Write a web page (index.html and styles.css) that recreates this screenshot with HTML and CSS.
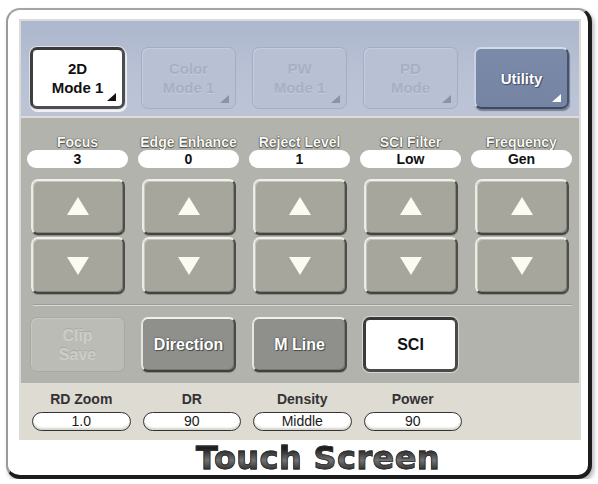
FILE: index.html
```html
<!DOCTYPE html>
<html lang="en">
<head>
<meta charset="utf-8">
<title>Touch Screen</title>
<link rel="stylesheet" href="styles.css">
</head>
<body>
<div class="device">
  <div class="screen">
    <div class="modes">
      <div class="mode mode-on">2D<br>Mode 1<span class="corner"></span></div>
      <div class="mode mode-off">Color<br>Mode 1<span class="corner"></span></div>
      <div class="mode mode-off">PW<br>Mode 1<span class="corner"></span></div>
      <div class="mode mode-off">PD<br>Mode<span class="corner"></span></div>
      <div class="mode mode-util">Utility<span class="corner"></span></div>
    </div>

    <div class="panel">
      <div class="params">
        <div class="param">
          <div class="param-name">Focus</div>
          <div class="param-value">3</div>
          <div class="step step-up"><span class="tri tri-up"></span></div>
          <div class="step step-down"><span class="tri tri-down"></span></div>
        </div>
        <div class="param">
          <div class="param-name">Edge Enhance</div>
          <div class="param-value">0</div>
          <div class="step step-up"><span class="tri tri-up"></span></div>
          <div class="step step-down"><span class="tri tri-down"></span></div>
        </div>
        <div class="param">
          <div class="param-name">Reject Level</div>
          <div class="param-value">1</div>
          <div class="step step-up"><span class="tri tri-up"></span></div>
          <div class="step step-down"><span class="tri tri-down"></span></div>
        </div>
        <div class="param">
          <div class="param-name">SCI Filter</div>
          <div class="param-value">Low</div>
          <div class="step step-up"><span class="tri tri-up"></span></div>
          <div class="step step-down"><span class="tri tri-down"></span></div>
        </div>
        <div class="param">
          <div class="param-name">Frequency</div>
          <div class="param-value">Gen</div>
          <div class="step step-up"><span class="tri tri-up"></span></div>
          <div class="step step-down"><span class="tri tri-down"></span></div>
        </div>
      </div>

      <div class="divider"></div>

      <div class="actions">
        <div class="action action-off">Clip<br>Save</div>
        <div class="action action-gray">Direction</div>
        <div class="action action-gray">M Line</div>
        <div class="action action-on">SCI</div>
      </div>
    </div>

    <div class="settings">
      <div class="setting">
        <div class="setting-name">RD Zoom</div>
        <div class="setting-value">1.0</div>
      </div>
      <div class="setting">
        <div class="setting-name">DR</div>
        <div class="setting-value">90</div>
      </div>
      <div class="setting">
        <div class="setting-name">Density</div>
        <div class="setting-value">Middle</div>
      </div>
      <div class="setting">
        <div class="setting-name">Power</div>
        <div class="setting-value">90</div>
      </div>
    </div>
  </div>

  <div class="title">Touch Screen</div>
</div>
</body>
</html>
```

FILE: styles.css
```css
* {
  box-sizing: border-box;
}

html,
body {
  margin: 0;
  background: #ffffff;
}

body {
  font-family: "Liberation Sans", Arial, sans-serif;
}

/* outer white bezel with heavy shadowed right/bottom edge */
.device {
  width: 586px;
  margin: 8px 0 0 6px;
  background: #ffffff;
  border-style: solid;
  border-width: 2px 4px 4px 2px;
  border-color: #a4a4a4 #1c1c1c #1c1c1c #9a9a9a;
  border-radius: 14px;
  padding: 9px 7px 0 11px;
  box-shadow: 2px 3px 4px rgba(0, 0, 0, 0.3);
}

.screen {
  width: 562px;
  background: #dcdcd9;
  padding: 2px 2px 0 2px;
  display: flex;
  flex-direction: column;
  gap: 2px;
}

/* ---------- mode band ---------- */
.modes {
  height: 95px;
  background: linear-gradient(#adb7cd, #b9c2d5 60%, #bcc4d6);
  padding: 26px 0 0 6px;
  display: grid;
  grid-template-columns: repeat(5, 101px);
  column-gap: 10px;
  align-items: start;
}

.mode {
  position: relative;
  justify-self: center;
  width: 95px;
  height: 62px;
  border-radius: 7px;
  display: flex;
  align-items: center;
  justify-content: center;
  text-align: center;
  font-size: 15px;
  font-weight: bold;
  line-height: 19px;
}

.mode-on {
  background: #ffffff;
  color: #111111;
  border: 3px solid #4d4d4d;
  border-top-color: #3a3a3a;
  border-left-color: #3e3e3e;
  box-shadow: 0 0 0 1px #dfe2e8, 1px 2px 0 1px #eef0f4;
}

.mode-off {
  background: #b8c1d4;
  color: #a7b0c2;
  border: 1px solid #a5aec1;
  box-shadow: inset 1px 1px 0 #c5cddd;
  text-shadow: 0 1px 0 #c6cddd;
}

.mode-util {
  background: linear-gradient(#7b8aa8, #7584a3);
  color: #ffffff;
  border: 2px solid;
  border-color: #d3d9e5 #46516a #3f4960 #c9d0de;
  box-shadow: 1px 2px 1px rgba(40, 48, 66, 0.45);
  text-shadow: 0 0 2px #3c4660, 1px 1px 0 #4a5470;
}

.corner {
  position: absolute;
  right: 6px;
  bottom: 5px;
  width: 0;
  height: 0;
  border-left: 9px solid transparent;
  border-bottom: 8px solid #111111;
}

.mode-off .corner {
  border-bottom-color: #8b93a6;
}

.mode-util .corner {
  border-bottom-color: #ffffff;
}

/* ---------- control panel ---------- */
.panel {
  height: 265px;
  background: #b3b3ad;
  padding: 18px 0 11px 6px;
}

.params,
.actions {
  display: grid;
  grid-template-columns: repeat(5, 101px);
  column-gap: 10px;
}

.param {
  display: flex;
  flex-direction: column;
  align-items: center;
}

.param-name {
  height: 13px;
  line-height: 13px;
  font-size: 14px;
  font-weight: bold;
  color: #f8f8f4;
  white-space: nowrap;
  text-shadow: 0 0 1px #3c3c38, 0 0 1px #3c3c38, 0 1px 1px #555551;
}

.param-value {
  margin-top: 1px;
  width: 101px;
  height: 18px;
  line-height: 18px;
  border-radius: 9px;
  background: #ffffff;
  text-align: center;
  font-size: 14px;
  font-weight: bold;
  color: #111111;
}

.step {
  width: 94px;
  background: #a7a69c;
  border: 2px solid;
  border-color: #f0f0ea #4e4e49 #45453f #ecece5;
  border-radius: 7px;
  box-shadow: inset -1px -1px 0 #84837b, inset 1px 1px 0 #c6c5bc, 0 1px 0 #8f8f89;
  display: flex;
  align-items: center;
  justify-content: center;
}

.step-up {
  margin-top: 11px;
  height: 56px;
}

.step-down {
  margin-top: 2px;
  height: 57px;
}

.tri {
  width: 0;
  height: 0;
  border-left: 11px solid transparent;
  border-right: 11px solid transparent;
}

.tri-up {
  border-bottom: 18px solid #fbfbf1;
  margin-top: -2px;
}

.tri-down {
  border-top: 18px solid #fbfbf1;
}

.divider {
  margin: 10px 7px 11px 6px;
  height: 2px;
  border-top: 1px solid #9c9c97;
  border-bottom: 1px solid #d9d9d5;
}

.action {
  justify-self: center;
  width: 95px;
  height: 55px;
  border-radius: 7px;
  display: flex;
  align-items: center;
  justify-content: center;
  text-align: center;
  font-size: 16px;
  font-weight: bold;
  line-height: 19px;
}

.action-off {
  background: #bcbcb6;
  color: #cdcdc8;
  border: 1px solid #a9a9a4;
  box-shadow: inset 1px 1px 0 #c8c8c3;
  text-shadow: 0 -1px 0 #a9a9a4;
}

.action-gray {
  background: #8f8f8b;
  color: #ffffff;
  border: 2px solid;
  border-color: #f0f0ec #4a4a46 #3f3f3b #e6e6e1;
  box-shadow: inset -1px -1px 0 #777773, 0 1px 0 #8a8a86;
  text-shadow: 0 0 2px #3a3a37, 1px 1px 0 #555551;
}

.action-on {
  background: #ffffff;
  color: #111111;
  border: 3px solid #4a4a4a;
  border-top-color: #383838;
  border-left-color: #3c3c3c;
  box-shadow: 0 0 0 1px #d7d7d3;
}

/* ---------- settings strip ---------- */
.settings {
  height: 55px;
  background: #dedbd3;
  padding: 7px 0 0 11px;
  display: grid;
  grid-template-columns: repeat(4, 98.5px);
  column-gap: 12px;
}

.setting {
  display: flex;
  flex-direction: column;
  align-items: center;
}

.setting-name {
  height: 14px;
  line-height: 14px;
  font-size: 14px;
  font-weight: bold;
  color: #333333;
}

.setting-value {
  margin-top: 6px;
  width: 100%;
  height: 19px;
  line-height: 17px;
  border: 1px solid #333333;
  border-radius: 10px;
  background: #ffffff;
  box-shadow: inset 0 -2px 2px #d6d4cd;
  text-align: center;
  font-size: 14px;
  color: #1a1a1a;
}

/* ---------- caption ---------- */
.title {
  height: 35px;
  line-height: 36px;
  padding-left: 36px;
  text-align: center;
  font-family: "DejaVu Sans", Verdana, sans-serif;
  font-weight: bold;
  font-size: 32px;
  letter-spacing: 0.4px;
  color: #3a3a3a;
  background: linear-gradient(#1e1e1e 25%, #727272 58%, #2a2a2a 88%);
  -webkit-background-clip: text;
  background-clip: text;
  -webkit-text-fill-color: transparent;
  -webkit-text-stroke: 0.8px #2e2e2e;
}
```
